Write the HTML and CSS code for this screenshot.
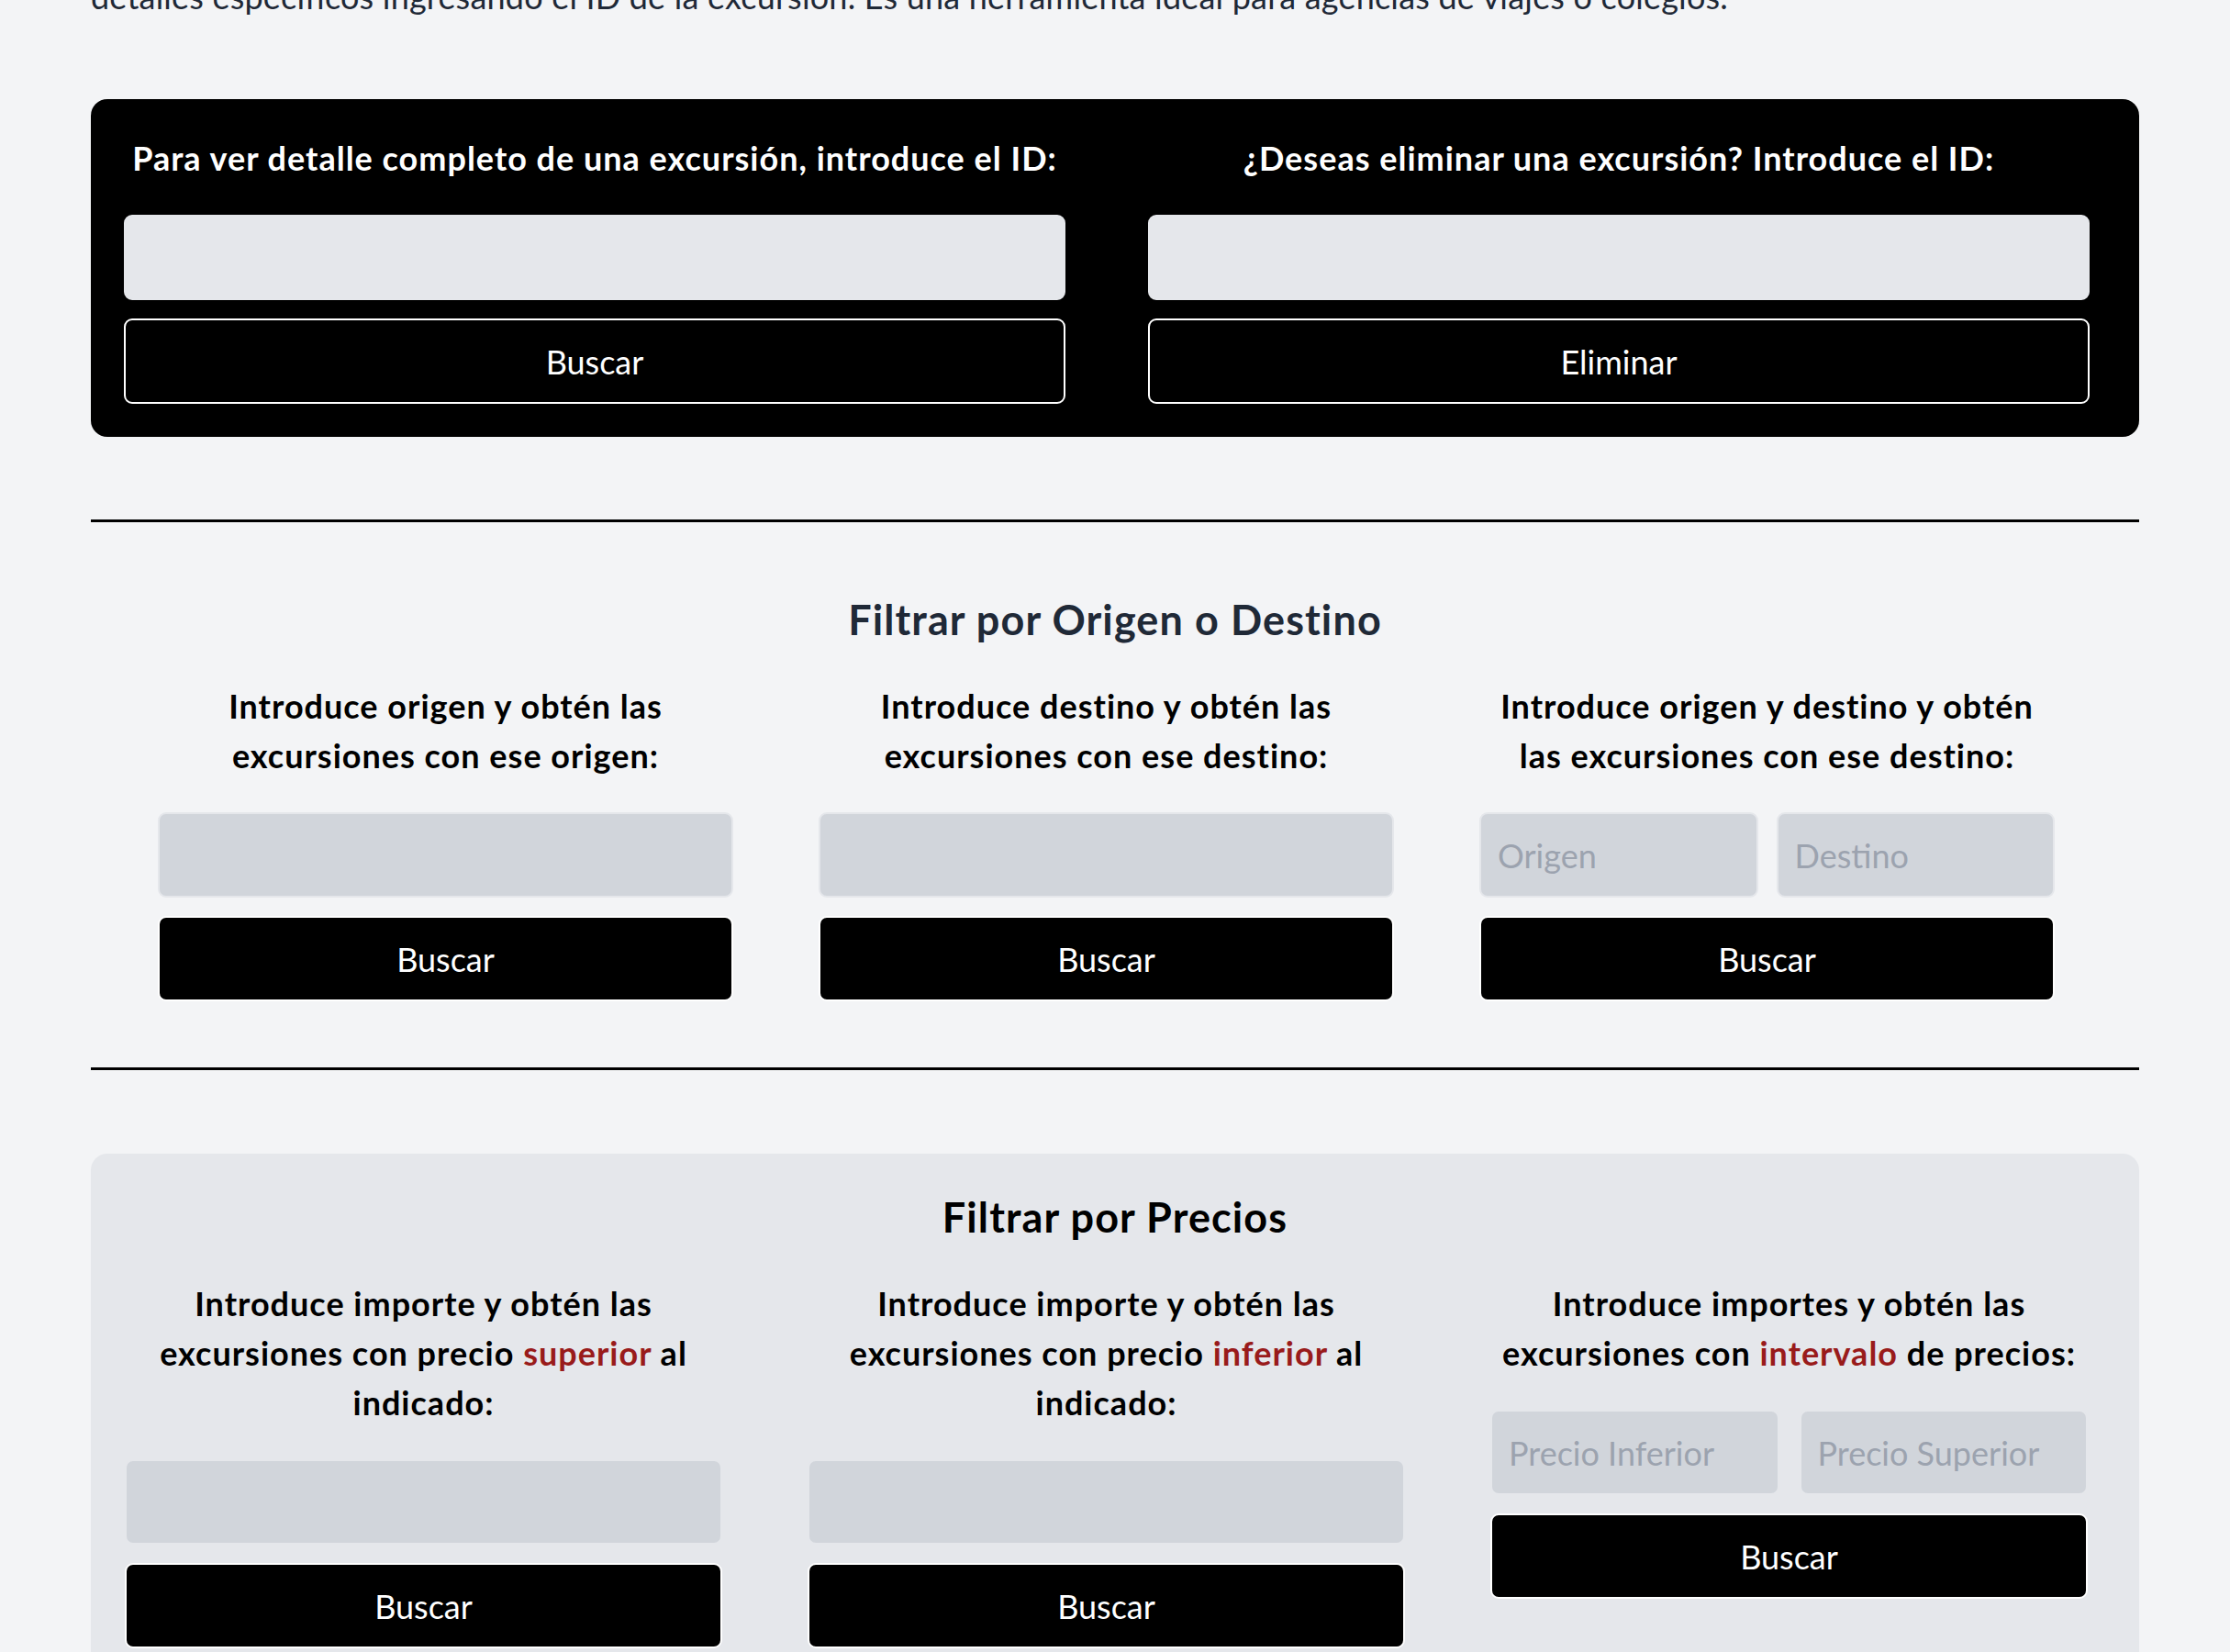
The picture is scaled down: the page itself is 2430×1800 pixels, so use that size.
FILE: index.html
```html
<!DOCTYPE html>
<html lang="es">
<head>
<meta charset="utf-8">
<title>Excursiones</title>
<link rel="stylesheet" href="styles.css">
</head>
<body>
<main class="container">
  <p class="intro">detalles específicos ingresando el ID de la excursión. Es una herramienta ideal para agencias de viajes o colegios.</p>

  <section class="id-panel">
    <div class="id-col">
      <h3 class="id-title">Para ver detalle completo de una excursión, introduce el ID:</h3>
      <input class="field field-light" type="text">
      <button class="btn" type="button">Buscar</button>
    </div>
    <div class="id-col">
      <h3 class="id-title">¿Deseas eliminar una excursión? Introduce el ID:</h3>
      <input class="field field-light" type="text">
      <button class="btn" type="button">Eliminar</button>
    </div>
  </section>

  <hr class="divider divider-1">

  <section class="filter filter-od">
    <h2 class="filter-title">Filtrar por Origen o Destino</h2>
    <div class="filter-grid grid-od">
      <div class="filter-col">
        <h3 class="filter-label">Introduce origen y obtén las<br>excursiones con ese origen:</h3>
        <div class="field-row"><input class="field" type="text"></div>
        <button class="btn" type="button">Buscar</button>
      </div>
      <div class="filter-col">
        <h3 class="filter-label">Introduce destino y obtén las<br>excursiones con ese destino:</h3>
        <div class="field-row"><input class="field" type="text"></div>
        <button class="btn" type="button">Buscar</button>
      </div>
      <div class="filter-col">
        <h3 class="filter-label">Introduce origen y destino y obtén<br>las excursiones con ese destino:</h3>
        <div class="field-row">
          <input class="field" type="text" placeholder="Origen">
          <input class="field" type="text" placeholder="Destino">
        </div>
        <button class="btn" type="button">Buscar</button>
      </div>
    </div>
  </section>

  <hr class="divider divider-2">

  <section class="filter price-panel">
    <h2 class="filter-title">Filtrar por Precios</h2>
    <div class="filter-grid grid-price">
      <div class="filter-col">
        <h3 class="filter-label">Introduce importe y obtén las<br>excursiones con precio <span class="accent">superior</span> al<br>indicado:</h3>
        <div class="field-row"><input class="field" type="number"></div>
        <button class="btn" type="button">Buscar</button>
      </div>
      <div class="filter-col">
        <h3 class="filter-label">Introduce importe y obtén las<br>excursiones con precio <span class="accent">inferior</span> al<br>indicado:</h3>
        <div class="field-row"><input class="field" type="number"></div>
        <button class="btn" type="button">Buscar</button>
      </div>
      <div class="filter-col">
        <h3 class="filter-label">Introduce importes y obtén las<br>excursiones con <span class="accent">intervalo</span> de precios:</h3>
        <div class="field-row">
          <input class="field" type="text" placeholder="Precio Inferior">
          <input class="field" type="text" placeholder="Precio Superior">
        </div>
        <button class="btn" type="button">Buscar</button>
      </div>
    </div>
  </section>
</main>
</body>
</html>
```

FILE: styles.css
```css
html, body {
  margin: 0;
  padding: 0;
}

body {
  background: #f3f4f6;
  font-family: Lato, "Open Sans", "Liberation Sans", sans-serif;
  color: #000;
}

.container {
  width: 2232px;
  margin: 0 auto;
}

.intro {
  margin: -28px 0 0;
  font-size: 36px;
  line-height: 48px;
  letter-spacing: 0.2px;
  color: #1f2937;
}

/* ID panel */
.id-panel {
  margin-top: 88px;
  background: #000;
  border-radius: 18px;
  padding: 36px;
  display: grid;
  grid-template-columns: 1026px 1026px;
  column-gap: 90px;
  justify-content: start;
}

.id-col {
  display: flex;
  flex-direction: column;
}

.id-title {
  margin: 4px 0 38px;
  font-size: 36px;
  line-height: 48px;
  font-weight: 700;
  letter-spacing: 1px;
  color: #fff;
  text-align: center;
}

/* Fields & buttons */
.field {
  display: block;
  width: 100%;
  min-width: 0;
  height: 93px;
  box-sizing: border-box;
  border: 2px solid #e5e7eb;
  border-radius: 9px;
  background: #d1d5db;
  font-family: inherit;
  font-size: 36px;
  color: #111827;
  padding: 0 18px;
  outline: none;
  -moz-appearance: textfield;
}

.field::-webkit-outer-spin-button,
.field::-webkit-inner-spin-button {
  -webkit-appearance: none;
  margin: 0;
}

.field::placeholder {
  color: #9ca3af;
}

.field-light {
  background: #e5e7eb;
}

.btn {
  display: block;
  width: 100%;
  height: 93px;
  margin-top: 20px;
  box-sizing: border-box;
  border: 2px solid #fff;
  border-radius: 9px;
  background: #000;
  color: #fff;
  font-family: inherit;
  font-size: 36px;
  font-weight: 400;
  padding: 0;
  cursor: pointer;
}

/* Dividers */
.divider {
  margin: 0;
  height: 0;
  border: 0;
  border-top: 3px solid #000;
}

.divider-1 {
  margin-top: 90px;
}

.divider-2 {
  margin-top: 72px;
}

/* Filter sections */
.filter-od {
  margin-top: 79px;
}

.filter-title {
  margin: 0;
  text-align: center;
  font-size: 45px;
  line-height: 54px;
  font-weight: 700;
  letter-spacing: 1.1px;
  color: #1f2937;
}

.filter-grid {
  display: grid;
  column-gap: 93px;
  margin-top: 40px;
  align-items: start;
}

.grid-od {
  grid-template-columns: repeat(3, 627px);
  padding-left: 73px;
}

.grid-price {
  grid-template-columns: repeat(3, 651px);
  padding-left: 37px;
}

.filter-col {
  display: flex;
  flex-direction: column;
}

.filter-label {
  margin: 0 0 35px;
  font-size: 36px;
  line-height: 54px;
  font-weight: 700;
  letter-spacing: 1px;
  color: #000;
  text-align: center;
}

.field-row {
  display: flex;
  gap: 20px;
}

.accent {
  color: #991b1b;
}

/* Price panel */
.price-panel {
  margin-top: 91px;
  background: #e5e7eb;
  border-radius: 18px;
  padding: 42px 0 60px;
}

.price-panel .filter-title {
  color: #000;
}

.price-panel .field-row {
  gap: 22px;
}
```
